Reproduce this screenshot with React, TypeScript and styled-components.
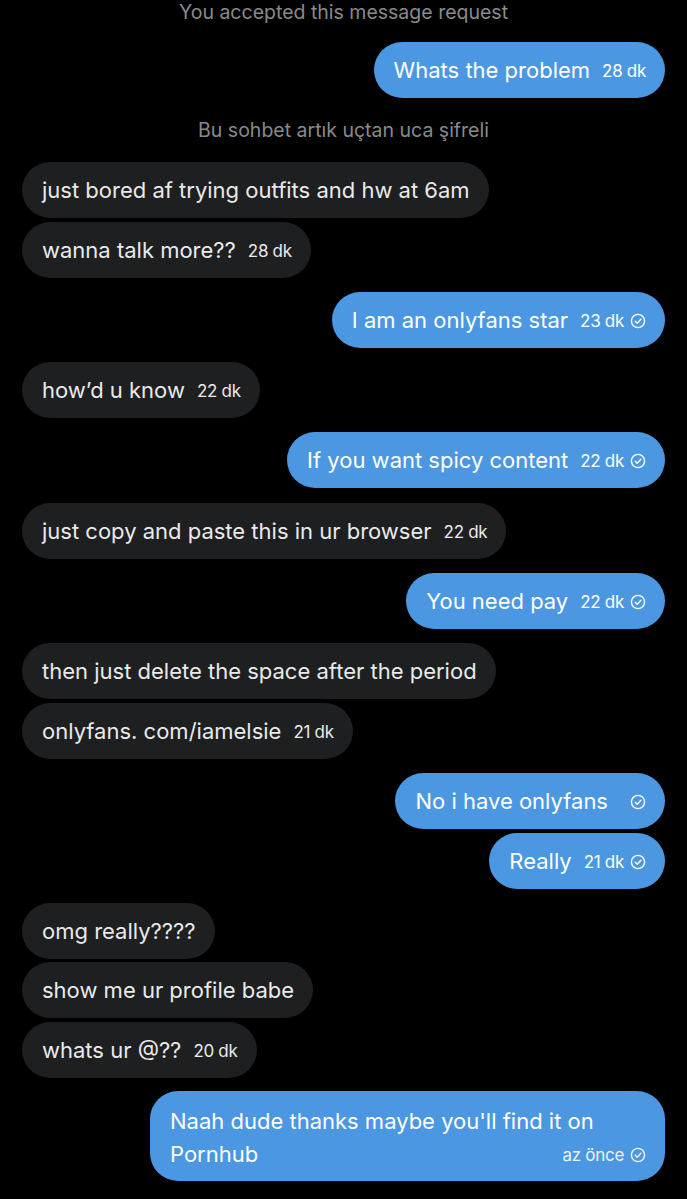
import React from 'react';
import styled, {createGlobalStyle} from 'styled-components';

const GlobalStyle = createGlobalStyle`
    html, body {
        margin: 0;
        padding: 0;
        background: #000;
    }
    body {
        font-family: Inter, "Noto Sans", "DejaVu Sans", sans-serif;
        -webkit-font-smoothing: antialiased;
    }
`;

type Message = {
	text: string;
	mine: boolean;
	time?: string;
	read?: boolean;
	gap: number;
};

const Screen = styled.div`
    width: 687px;
    height: 1199px;
    overflow: hidden;
    background: #000;
    display: flex;
    flex-direction: column;
    padding: 0 22px;
    box-sizing: border-box;
`;

const SystemNote = styled.div<{$top: number; $bottom: number}>`
    text-align: center;
    color: #8a8a8a;
    font-size: 19.5px;
    line-height: 24px;
    margin-top: ${({$top}) => $top}px;
    margin-bottom: ${({$bottom}) => $bottom}px;
`;

const Bubble = styled.div<{$mine: boolean; $gap: number}>`
    align-self: ${({$mine}) => ($mine ? 'flex-end' : 'flex-start')};
    display: flex;
    align-items: center;
    gap: 12px;
    height: 56px;
    box-sizing: border-box;
    padding: 0 19px 0 20px;
    border-radius: 28px;
    margin-top: ${({$gap}) => $gap}px;
    background: ${({$mine}) => ($mine ? '#4b97e2' : '#1e1f21')};
    color: ${({$mine}) => ($mine ? '#fff' : '#eaeaea')};
    font-size: 22px;
    white-space: nowrap;
`;

const LongBubble = styled.div`
    align-self: flex-end;
    display: flex;
    flex-direction: column;
    width: 515px;
    box-sizing: border-box;
    padding: 14px 19px 10px 20px;
    margin-top: 13px;
    border-radius: 28px;
    background: #4b97e2;
    color: #fff;
    font-size: 22px;
    line-height: 32px;
`;

const LastLine = styled.div`
    display: flex;
    align-items: center;
    justify-content: space-between;
`;

const Meta = styled.span<{$soft?: boolean}>`
    display: inline-flex;
    align-items: center;
    gap: 6px;
    font-size: 17px;
    letter-spacing: -0.3px;
    margin-top: 2px;
    color: ${({$soft}) => ($soft ? '#eef4fb' : 'inherit')};
`;

const Spacer = styled.span`
    width: 4px;
`;

function ReadIcon() {
	return (
		<svg width="16" height="16" viewBox="0 0 16 16" fill="none">
			<circle cx="8" cy="8" r="6.6" stroke="currentColor" strokeWidth="1.4" />
			<path d="M5.2 8.2l2 2 3.7-4" stroke="currentColor" strokeWidth="1.4" strokeLinecap="round" strokeLinejoin="round" />
		</svg>
	);
}

const GROUP = 14.3;
const STACK = 3.5;

const messages: Message[] = [
	{text: 'just bored af trying outfits and hw at 6am', mine: false, gap: 0},
	{text: 'wanna talk more??', mine: false, time: '28 dk', gap: STACK},
	{text: 'I am an onlyfans star', mine: true, time: '23 dk', read: true, gap: GROUP},
	{text: 'how\u2019d u know', mine: false, time: '22 dk', gap: GROUP},
	{text: 'If you want spicy content', mine: true, time: '22 dk', read: true, gap: GROUP},
	{text: 'just copy and paste this in ur browser', mine: false, time: '22 dk', gap: GROUP},
	{text: 'You need pay', mine: true, time: '22 dk', read: true, gap: GROUP},
	{text: 'then just delete the space after the period', mine: false, gap: GROUP},
	{text: 'onlyfans. com/iamelsie', mine: false, time: '21 dk', gap: STACK},
	{text: 'No i have onlyfans', mine: true, read: true, gap: GROUP},
	{text: 'Really', mine: true, time: '21 dk', read: true, gap: STACK},
	{text: 'omg really????', mine: false, gap: GROUP},
	{text: 'show me ur profile babe', mine: false, gap: STACK},
	{text: 'whats ur @??', mine: false, time: '20 dk', gap: STACK},
];

function Row({m}: {m: Message}) {
	return (
		<Bubble $mine={m.mine} $gap={m.gap}>
			<span>{m.text}</span>
			{(m.time || m.read) && (
				<Meta>
					{!m.time && <Spacer />}
					{m.time}
					{m.read && <ReadIcon />}
				</Meta>
			)}
		</Bubble>
	);
}

export default function App() {
	return (
		<>
			<GlobalStyle />
			<Screen>
				<SystemNote $top={0} $bottom={18}>You accepted this message request</SystemNote>
				<Row m={{text: 'Whats the problem', mine: true, time: '28 dk', gap: 0}} />
				<SystemNote $top={20} $bottom={20}>Bu sohbet artık uçtan uca şifreli</SystemNote>
				{messages.map((m, i) => <Row key={i} m={m} />)}
				<LongBubble>
					<span>Naah dude thanks maybe you'll find it on</span>
					<LastLine>
						<span>Pornhub</span>
						<Meta $soft>
							az önce
							<ReadIcon />
						</Meta>
					</LastLine>
				</LongBubble>
			</Screen>
		</>
	);
}
